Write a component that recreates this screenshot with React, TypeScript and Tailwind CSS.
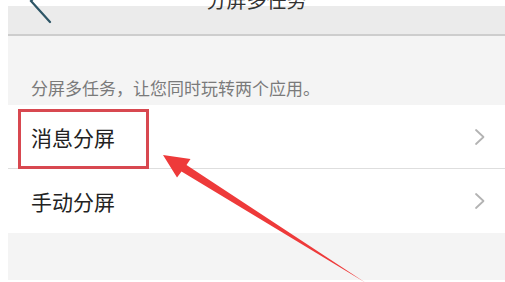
const cjk = { fontFamily: '"Noto Sans CJK SC", "Noto Sans", sans-serif' }

function Chevron() {
  return (
    <svg width="12" height="18" viewBox="0 0 12 18" className="shrink-0">
      <path d="M2 2 L9.5 9 L2 16" fill="none" stroke="#b3b3b3" strokeWidth="1.8" strokeLinecap="round" strokeLinejoin="round" />
    </svg>
  )
}

function Row({ label, divider }: { label: string; divider?: boolean }) {
  return (
    <div className={`flex h-[64px] items-center justify-between bg-white pl-[23px] pr-[19px] ${divider ? 'border-b border-[#dedede]' : ''}`}>
      <span className="text-[21px] leading-[24px] text-[#222]" style={cjk}>{label}</span>
      <Chevron />
    </div>
  )
}

export default function App() {
  return (
    <div className="relative h-[282px] w-[505px] overflow-hidden bg-white pl-[8px] pt-[6px]" style={cjk}>
      <div className="flex h-[274px] flex-col">
        {/* header */}
        <div className="relative h-[30px] shrink-0 border-b-2 border-[#cdcdcd] bg-[#ebebeb]">
          <svg className="absolute left-[18px] top-[-16px]" width="30" height="36" viewBox="0 0 30 36">
            <path d="M24 -10 L5 11 L24 32" fill="none" stroke="#2d5566" strokeWidth="2.2" strokeLinecap="round" />
          </svg>
          <div className="-mt-[16px] text-center text-[20px] leading-[20px] text-[#333]">分屏多任务</div>
        </div>

        {/* description */}
        <div className="shrink-0 bg-[#f4f4f4] pl-[23px] pt-[41px] pb-[7px]">
          <p className="text-[17px] leading-[21px] text-[#7a7a7a]">分屏多任务，让您同时玩转两个应用。</p>
        </div>

        <Row label="消息分屏" divider />
        <Row label="手动分屏" />

        <div className="h-[47px] shrink-0 bg-[#f4f4f4]" />
      </div>

      {/* annotation */}
      <div className="absolute left-[18px] top-[109px] h-[60px] w-[131px] border-[3px] border-[#d84850]" />
      <svg className="absolute left-0 top-0" width="505" height="282" viewBox="0 0 505 282">
        <polygon
          points="163,155 177,177.5 181.5,171.5 366,283 186.5,165 190.5,159"
          fill="#ee3a3a"
        />
      </svg>
    </div>
  )
}
